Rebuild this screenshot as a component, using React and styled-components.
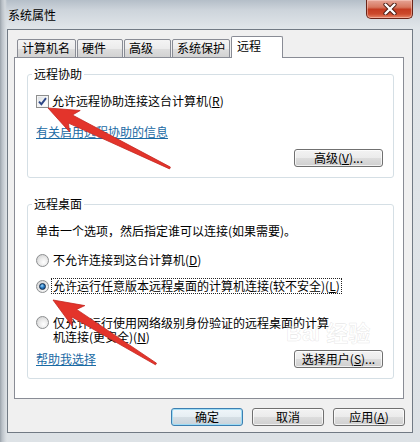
import React from "react";
import styled, { createGlobalStyle, css } from "styled-components";

const FONT = `"Noto Sans CJK SC", "Liberation Sans", sans-serif`;

const Global = createGlobalStyle`
  html, body { margin: 0; padding: 0; }
  body { font-family: ${FONT}; font-size: 12px; color: #000; background: #dde2e7; }
`;

const Window = styled.div`
  position: relative;
  width: 420px;
  height: 442px;
  overflow: hidden;
  display: flex;
  flex-direction: column;
  background:
    linear-gradient(90deg, #9aa2aa 0, #b9c0c7 2px, #d3d8dd 5px, rgba(220,225,230,0) 7px),
    linear-gradient(180deg, #b4bec8 0, #cdd4db 10px, #e0e5e9 28px, #dde2e6 100%);
`;

const TitleBar = styled.div`
  flex: none;
  height: 29px;
  display: flex;
  align-items: flex-start;
`;

const Title = styled.div`
  margin: 8px 0 0 8px;
  line-height: 14px;
  font-size: 12px;
`;

const CloseButton = styled.div`
  margin-left: auto;
  margin-right: 7px;
  width: 47px;
  height: 19px;
  box-sizing: border-box;
  border: 1px solid #6a2418;
  border-top: none;
  border-radius: 0 0 5px 5px;
  background: linear-gradient(180deg, #e6a496 0%, #d7775f 40%, #c43c22 52%, #cc4a2c 78%, #e8886a 100%);
  box-shadow: inset 0 0 0 1px rgba(255, 220, 210, 0.45);
  display: flex;
  align-items: center;
  justify-content: center;
`;

const Client = styled.div`
  flex: none;
  margin: 0 7px;
  height: 404px;
  box-sizing: border-box;
  border: 1px solid #717a84;
  background: #f0f0f0;
  padding: 6px 7px 0 6px;
  display: flex;
  flex-direction: column;
`;

const TabRow = styled.div`
  display: flex;
  align-items: flex-end;
  height: 22px;
  padding-left: 3px;
  margin-bottom: -1px;
  position: relative;
  z-index: 1;
`;

const Tab = styled.div`
  box-sizing: border-box;
  width: ${(p) => p.$w}px;
  height: 19px;
  margin-right: 1px;
  padding-left: 4px;
  border: 1px solid #898c95;
  border-radius: 2px 2px 0 0;
  line-height: 16px;
  white-space: nowrap;
  background: linear-gradient(180deg, #f4f4f4 0%, #ececec 50%, #dedede 51%, #d2d2d2 100%);
  ${(p) =>
    p.$active &&
    css`
      height: 22px;
      padding-left: 5px;
      border-bottom: none;
      background: #fff;
      line-height: 17px;
    `}
`;

const Panel = styled.div`
  width: 390px;
  height: 342px;
  box-sizing: border-box;
  border: 1px solid #898c95;
  background: #fff;
  padding: 9px 9px 0 12px;
`;

const Group = styled.fieldset`
  margin: ${(p) => p.$mt}px 0 0 0;
  padding: 0 10px 10px 8px;
  border: 1px solid #d5dfe5;
  border-radius: 3px;
  min-width: 0;
`;

const Legend = styled.legend`
  padding: 0 2px;
  margin-left: -4px;
  line-height: 14px;
  font-size: 12px;
`;

const Row = styled.div`
  display: flex;
  align-items: ${(p) => (p.$top ? "flex-start" : "center")};
  gap: ${(p) => p.$gap ?? 0}px;
  margin-top: ${(p) => p.$mt}px;
  line-height: ${(p) => p.$lh ?? 14}px;
  justify-content: ${(p) => p.$justify ?? "flex-start"};
`;

const Text = styled.div`
  margin-top: ${(p) => p.$mt}px;
  line-height: 14px;
  white-space: nowrap;
`;

const Link = styled.a`
  display: block;
  width: fit-content;
  margin-top: ${(p) => p.$mt ?? 0}px;
  color: #1a6aa4;
  text-decoration: underline;
  line-height: 14px;
`;

const Key = styled.span`
  text-decoration: underline;
`;

const Focus = styled.span`
  outline: 1px dotted #222;
  outline-offset: 0;
  padding: 0 1px;
  white-space: nowrap;
`;

const CheckBox = styled.span`
  flex: none;
  width: 13px;
  height: 13px;
  box-sizing: border-box;
  border: 1px solid #8e8f8f;
  background: linear-gradient(135deg, #d8dce0 0%, #f6f7f8 60%, #ffffff 100%);
  box-shadow: inset 0 0 0 1px #f4f4f4;
  display: flex;
  align-items: center;
  justify-content: center;
`;

const Radio = styled.span`
  flex: none;
  position: relative;
  width: 13px;
  height: 13px;
  box-sizing: border-box;
  border-radius: 50%;
  border: 1px solid #8c8e90;
  background: radial-gradient(circle at 60% 65%, #ffffff 0%, #eaeaea 45%, #c9c9c9 100%);
  ${(p) =>
    p.$checked &&
    css`
      &::after {
        content: "";
        position: absolute;
        left: 2px;
        top: 2px;
        width: 7px;
        height: 7px;
        box-sizing: border-box;
        border-radius: 50%;
        border: 1px solid #0f2a4a;
        background: radial-gradient(circle at 40% 35%, #a6dcfb 0%, #2b7cc4 45%, #0b3f78 100%);
      }
    `}
`;

const Label = styled.span`
  white-space: nowrap;
`;

const Button = styled.button`
  flex: none;
  width: ${(p) => p.$w}px;
  height: 18px;
  box-sizing: border-box;
  padding: 0;
  border: 1px solid #707070;
  border-radius: 3px;
  font-family: ${FONT};
  font-size: 12px;
  line-height: 16px;
  color: #000;
  background: linear-gradient(180deg, #f3f3f3 0%, #ebebeb 50%, #dddddd 51%, #cfcfcf 100%);
  box-shadow: inset 0 0 0 1px rgba(255, 255, 255, 0.7);
  ${(p) =>
    p.$default &&
    css`
      border-color: #3c7fb1;
      box-shadow: inset 0 0 0 1px #9fdcf5;
      background: linear-gradient(180deg, #f0f6fa 0%, #e6eef3 50%, #d6dfe5 51%, #c9d3da 100%);
    `}
`;

const Footer = styled.div`
  display: flex;
  justify-content: flex-end;
  gap: 9px;
  margin-top: 9px;
`;

const Overlay = styled.svg`
  position: absolute;
  left: 0;
  top: 0;
  width: 420px;
  height: 442px;
  pointer-events: none;
`;

const Watermark = styled.div`
  position: absolute;
  left: 286px;
  top: 322px;
  pointer-events: none;
  color: rgba(255, 255, 255, 0.4);
  -webkit-text-stroke: 0.6px rgba(150, 150, 150, 0.22);
  font-family: "Liberation Sans", "Noto Sans CJK SC", sans-serif;
  font-weight: bold;
  font-size: 22px;
  line-height: 24px;
  white-space: nowrap;
`;

function arrowPoints(tail, tip) {
  const [tx, ty] = tail;
  const [hx, hy] = tip;
  const dx = hx - tx;
  const dy = hy - ty;
  const L = Math.hypot(dx, dy);
  const ux = dx / L;
  const uy = dy / L;
  const nx = -uy;
  const ny = ux;
  const headLen = 25;
  const headHalf = 12;
  const shaftHalf = 4.5;
  const tailHalf = 1;
  const back = 5;
  const bx = hx - ux * headLen;
  const by = hy - uy * headLen;
  const p = (x, y) => `${x.toFixed(1)},${y.toFixed(1)}`;
  return [
    p(tx + nx * tailHalf, ty + ny * tailHalf),
    p(bx + nx * shaftHalf, by + ny * shaftHalf),
    p(bx - ux * back + nx * headHalf, by - uy * back + ny * headHalf),
    p(hx, hy),
    p(bx - ux * back - nx * headHalf, by - uy * back - ny * headHalf),
    p(bx - nx * shaftHalf, by - ny * shaftHalf),
    p(tx - nx * tailHalf, ty - ny * tailHalf),
  ].join(" ");
}

const tabs = [
  { label: "计算机名", w: 59 },
  { label: "硬件", w: 46 },
  { label: "高级", w: 47 },
  { label: "系统保护", w: 58 },
  { label: "远程", w: 52, active: true },
];

export default function App() {
  return (
    <>
      <Global />
      <Window>
        <TitleBar>
          <Title>系统属性</Title>
          <CloseButton>
            <svg width="14" height="12" viewBox="0 0 14 12">
              <path d="M2.5 1.5 L11.5 10.5 M11.5 1.5 L2.5 10.5" stroke="#4a1a12" strokeWidth="4.2" strokeLinecap="round" />
              <path d="M2.5 1.5 L11.5 10.5 M11.5 1.5 L2.5 10.5" stroke="#ffffff" strokeWidth="2.4" strokeLinecap="round" />
            </svg>
          </CloseButton>
        </TitleBar>
        <Client>
          <TabRow>
            {tabs.map((t) => (
              <Tab key={t.label} $w={t.w} $active={t.active}>
                {t.label}
              </Tab>
            ))}
          </TabRow>
          <Panel>
            <Group $mt={0}>
              <Legend>远程协助</Legend>
              <Row $mt={13} $gap={3}>
                <CheckBox>
                  <svg width="9" height="9" viewBox="0 0 9 9">
                    <path d="M1 4.6 L3.4 7.2 L8 1.2" fill="none" stroke="#2d4686" strokeWidth="1.9" />
                  </svg>
                </CheckBox>
                <Label>
                  允许远程协助连接这台计算机(<Key>R</Key>)
                </Label>
              </Row>
              <Link href="#" $mt={17}>有关启用远程协助的信息</Link>
              <Row $mt={10} $justify="flex-end">
                <Button $w={89}>
                  高级(<Key>V</Key>)...
                </Button>
              </Row>
            </Group>
            <Group $mt={19}>
              <Legend>远程桌面</Legend>
              <Text $mt={13}>单击一个选项，然后指定谁可以连接(如果需要)。</Text>
              <Row $mt={15} $gap={4}>
                <Radio />
                <Label>
                  不允许连接到这台计算机(<Key>D</Key>)
                </Label>
              </Row>
              <Row $mt={12} $gap={3}>
                <Radio $checked />
                <Focus>
                  允许运行任意版本远程桌面的计算机连接(较不安全)(<Key>L</Key>)
                </Focus>
              </Row>
              <Row $mt={23} $gap={4} $top $lh={14}>
                <Radio />
                <Label>
                  仅允许运行使用网络级别身份验证的远程桌面的计算
                  <br />
                  机连接(更安全)(<Key>N</Key>)
                </Label>
              </Row>
              <Row $mt={6} $justify="space-between">
                <Link href="#">帮助我选择</Link>
                <Button $w={89}>
                  选择用户(<Key>S</Key>)...
                </Button>
              </Row>
            </Group>
          </Panel>
          <Footer>
            <Button $w={72} $default>确定</Button>
            <Button $w={72}>取消</Button>
            <Button $w={72}>
              应用(<Key>A</Key>)
            </Button>
          </Footer>
        </Client>
        <Watermark>Bai 经验</Watermark>
        <Overlay viewBox="0 0 420 442">
          <polygon points={arrowPoints([170, 168], [48, 108])} fill="#e3342b" stroke="#c4261f" strokeWidth="0.8" strokeLinejoin="round" />
          <polygon points={arrowPoints([156, 364], [53, 300])} fill="#e3342b" stroke="#c4261f" strokeWidth="0.8" strokeLinejoin="round" />
        </Overlay>
      </Window>
    </>
  );
}
